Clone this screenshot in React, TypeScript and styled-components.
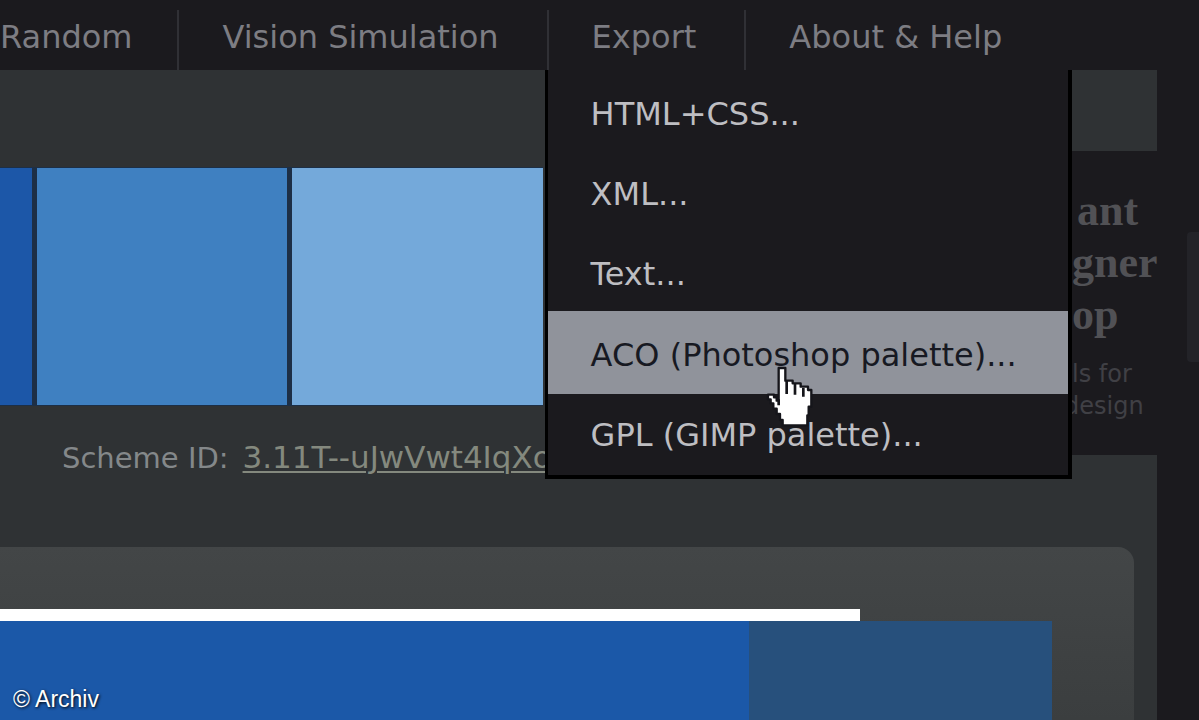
import React from "react";
import styled, { createGlobalStyle } from "styled-components";

const GlobalStyle = createGlobalStyle`
  *, *::before, *::after { box-sizing: border-box; }
  body {
    margin: 0;
    background: #1b1a1e;
    font-family: "DejaVu Sans", Verdana, sans-serif;
    overflow: hidden;
  }
`;

const Page = styled.div`
  display: flex;
  flex-direction: column;
  min-height: 100vh;
`;

const NavList = styled.ul`
  display: flex;
  height: 70px;
  margin: 0;
  padding: 0;
  list-style: none;
`;

const NavItem = styled.li`
  position: relative;
  flex: none;
  padding: 4px 48px 0 45px;

  &:first-child {
    padding: 4px 45px 0 0;
  }

  &:not(:first-child)::before {
    content: "";
    position: absolute;
    top: 10px;
    bottom: 0;
    left: 0;
    width: 2px;
    background: #303035;
  }
`;

const NavLink = styled.a`
  color: #7d7d83;
  font-size: 32px;
  line-height: 66px;
  text-decoration: none;
  white-space: nowrap;
`;

const Menu = styled.ul`
  position: absolute;
  top: 70px;
  left: -2px;
  z-index: 2;
  width: 527px;
  margin: 0;
  padding: 1px 0 3px;
  border: solid #000;
  border-width: 0 4px 4px 3px;
  background: #1b1a1e;
  list-style: none;
`;

const MenuItem = styled.li<{ $active?: boolean }>`
  position: relative;
  margin-bottom: ${(p) => (p.$active ? -2 : 0)}px;
  padding: ${(p) => (p.$active ? "1px 0 2px" : "0")};
  background: ${(p) => (p.$active ? "#90939b" : "transparent")};
`;

const MenuLink = styled.a<{ $active?: boolean }>`
  display: block;
  padding: 6px 0 0 43px;
  color: ${(p) => (p.$active ? "#171922" : "#bebec2")};
  font-size: 32px;
  line-height: 74px;
  text-decoration: none;
  white-space: nowrap;
`;

const Pointer = styled.svg`
  position: absolute;
  top: 55px;
  left: 218px;
  z-index: 3;
  width: 48px;
  height: 63px;
`;

const Body = styled.div`
  display: flex;
  flex: 1;
`;

const Sheet = styled.main`
  display: flex;
  flex: 1;
  flex-direction: column;
  min-width: 0;
  background: #2f3234;
`;

const Gutter = styled.div`
  display: flex;
  flex: none;
  justify-content: flex-end;
  width: 42px;
  padding-top: 162px;
`;

const SideTab = styled.div`
  width: 12px;
  height: 130px;
  border-radius: 4px 0 0 4px;
  background: #232328;
`;

const Upper = styled.div`
  display: flex;
  justify-content: space-between;
  height: 477px;
`;

const Scheme = styled.section`
  width: 543px;
  padding-top: 97px;
`;

const Swatches = styled.div`
  display: flex;
  gap: 5px;
  padding: 1px 0;
  background: #1d2f46;
`;

const Swatch = styled.div<{ $color: string; $width: number }>`
  width: ${(p) => p.$width}px;
  height: 237px;
  background: ${(p) => p.$color};
`;

const SchemeId = styled.p`
  display: flex;
  gap: 14px;
  align-items: baseline;
  margin: 0;
  padding: 31px 0 0 62px;
  color: #84888a;
  font-size: 29px;
  line-height: 40px;
  white-space: nowrap;
`;

const SchemeLink = styled.a`
  color: #84897e;
  font-size: 31px;
  text-decoration: underline;
  text-decoration-thickness: 2px;
  text-underline-offset: 3px;
`;

const Promo = styled.aside`
  width: 93px;
  height: 304px;
  margin-top: 81px;
  padding-top: 34px;
  background: #1b1a1e;
  white-space: nowrap;
`;

const PromoTitle = styled.h2`
  margin: 0;
  color: #515155;
  font-family: "Liberation Serif", serif;
  font-size: 44px;
  font-weight: 700;
  line-height: 52px;
`;

const PromoLine = styled.span<{ $indent?: number }>`
  display: block;
  padding-left: ${(p) => p.$indent ?? 0}px;
`;

const PromoText = styled.p`
  margin: 0;
  padding-top: 17px;
  color: #404045;
  font-size: 24px;
  line-height: 32px;
`;

const Panel = styled.section`
  display: flex;
  flex: 1;
  flex-direction: column;
  min-height: 173px;
  margin-right: 23px;
  padding: 62px 82px 0 0;
  border-radius: 0 16px 0 0;
  background: linear-gradient(#434647, #3b3e3f);
`;

const Highlight = styled.div`
  height: 12px;
  margin-right: 192px;
  background: #fff;
`;

const Preview = styled.div`
  display: flex;
  flex: 1;
  padding-right: 303px;
  background: #27507c;
`;

const PrimaryArea = styled.div`
  display: flex;
  flex: 1;
  align-items: flex-end;
  padding: 0 0 7px 13px;
  background: #1b58a8;
`;

const Credit = styled.small`
  color: #fff;
  font-family: "Liberation Sans", Arial, sans-serif;
  font-size: 23px;
  line-height: 28px;
  text-shadow: 1px 1px 3px #000;
`;

const exportFormats = [
  "HTML+CSS...",
  "XML...",
  "Text...",
  "ACO (Photoshop palette)...",
  "GPL (GIMP palette)...",
];
const activeFormat = 3;

function HandPointer() {
  return (
    <Pointer viewBox="80 78 144 189" aria-hidden="true">
      <path
        d="M118 84H138V122H160V130H184V140H206V150H216V200H208V226H204V256H130V240H122V222H112V206H102V190H94V178H86V164H104V172H112V182H118Z"
        fill="#fff"
        stroke="#15151a"
        strokeWidth="7"
        strokeLinejoin="round"
      />
      <path d="M142 122V162M167 132V164M192 144V170M118 178V196" fill="none" stroke="#15151a" strokeWidth="8" />
    </Pointer>
  );
}

function ExportMenu() {
  return (
    <Menu>
      {exportFormats.map((label, i) => (
        <MenuItem key={label} $active={i === activeFormat}>
          <MenuLink href="#" $active={i === activeFormat}>
            {label}
          </MenuLink>
          {i === activeFormat && <HandPointer />}
        </MenuItem>
      ))}
    </Menu>
  );
}

export default function App() {
  return (
    <Page>
      <GlobalStyle />
      <nav>
        <NavList>
          <NavItem>
            <NavLink href="#">Random</NavLink>
          </NavItem>
          <NavItem>
            <NavLink href="#">Vision Simulation</NavLink>
          </NavItem>
          <NavItem>
            <NavLink href="#">Export</NavLink>
            <ExportMenu />
          </NavItem>
          <NavItem>
            <NavLink href="#">About &amp; Help</NavLink>
          </NavItem>
        </NavList>
      </nav>
      <Body>
        <Sheet>
          <Upper>
            <Scheme>
              <Swatches>
                <Swatch $color="#1c57a8" $width={32} />
                <Swatch $color="#3f80c1" $width={250} />
                <Swatch $color="#74a9da" $width={251} />
              </Swatches>
              <SchemeId>
                <span>Scheme ID:</span>
                <SchemeLink href="#">3.11T--uJwVwt4IqXo</SchemeLink>
              </SchemeId>
            </Scheme>
            <Promo>
              <PromoTitle>
                <PromoLine $indent={13}>ant</PromoLine>
                <PromoLine $indent={8}>gner</PromoLine>
                <PromoLine $indent={8}>op</PromoLine>
              </PromoTitle>
              <PromoText>
                <PromoLine $indent={8}>ls for</PromoLine>
                <PromoLine>design</PromoLine>
              </PromoText>
            </Promo>
          </Upper>
          <Panel>
            <Highlight />
            <Preview>
              <PrimaryArea>
                <Credit>© Archiv</Credit>
              </PrimaryArea>
            </Preview>
          </Panel>
        </Sheet>
        <Gutter>
          <SideTab />
        </Gutter>
      </Body>
    </Page>
  );
}
